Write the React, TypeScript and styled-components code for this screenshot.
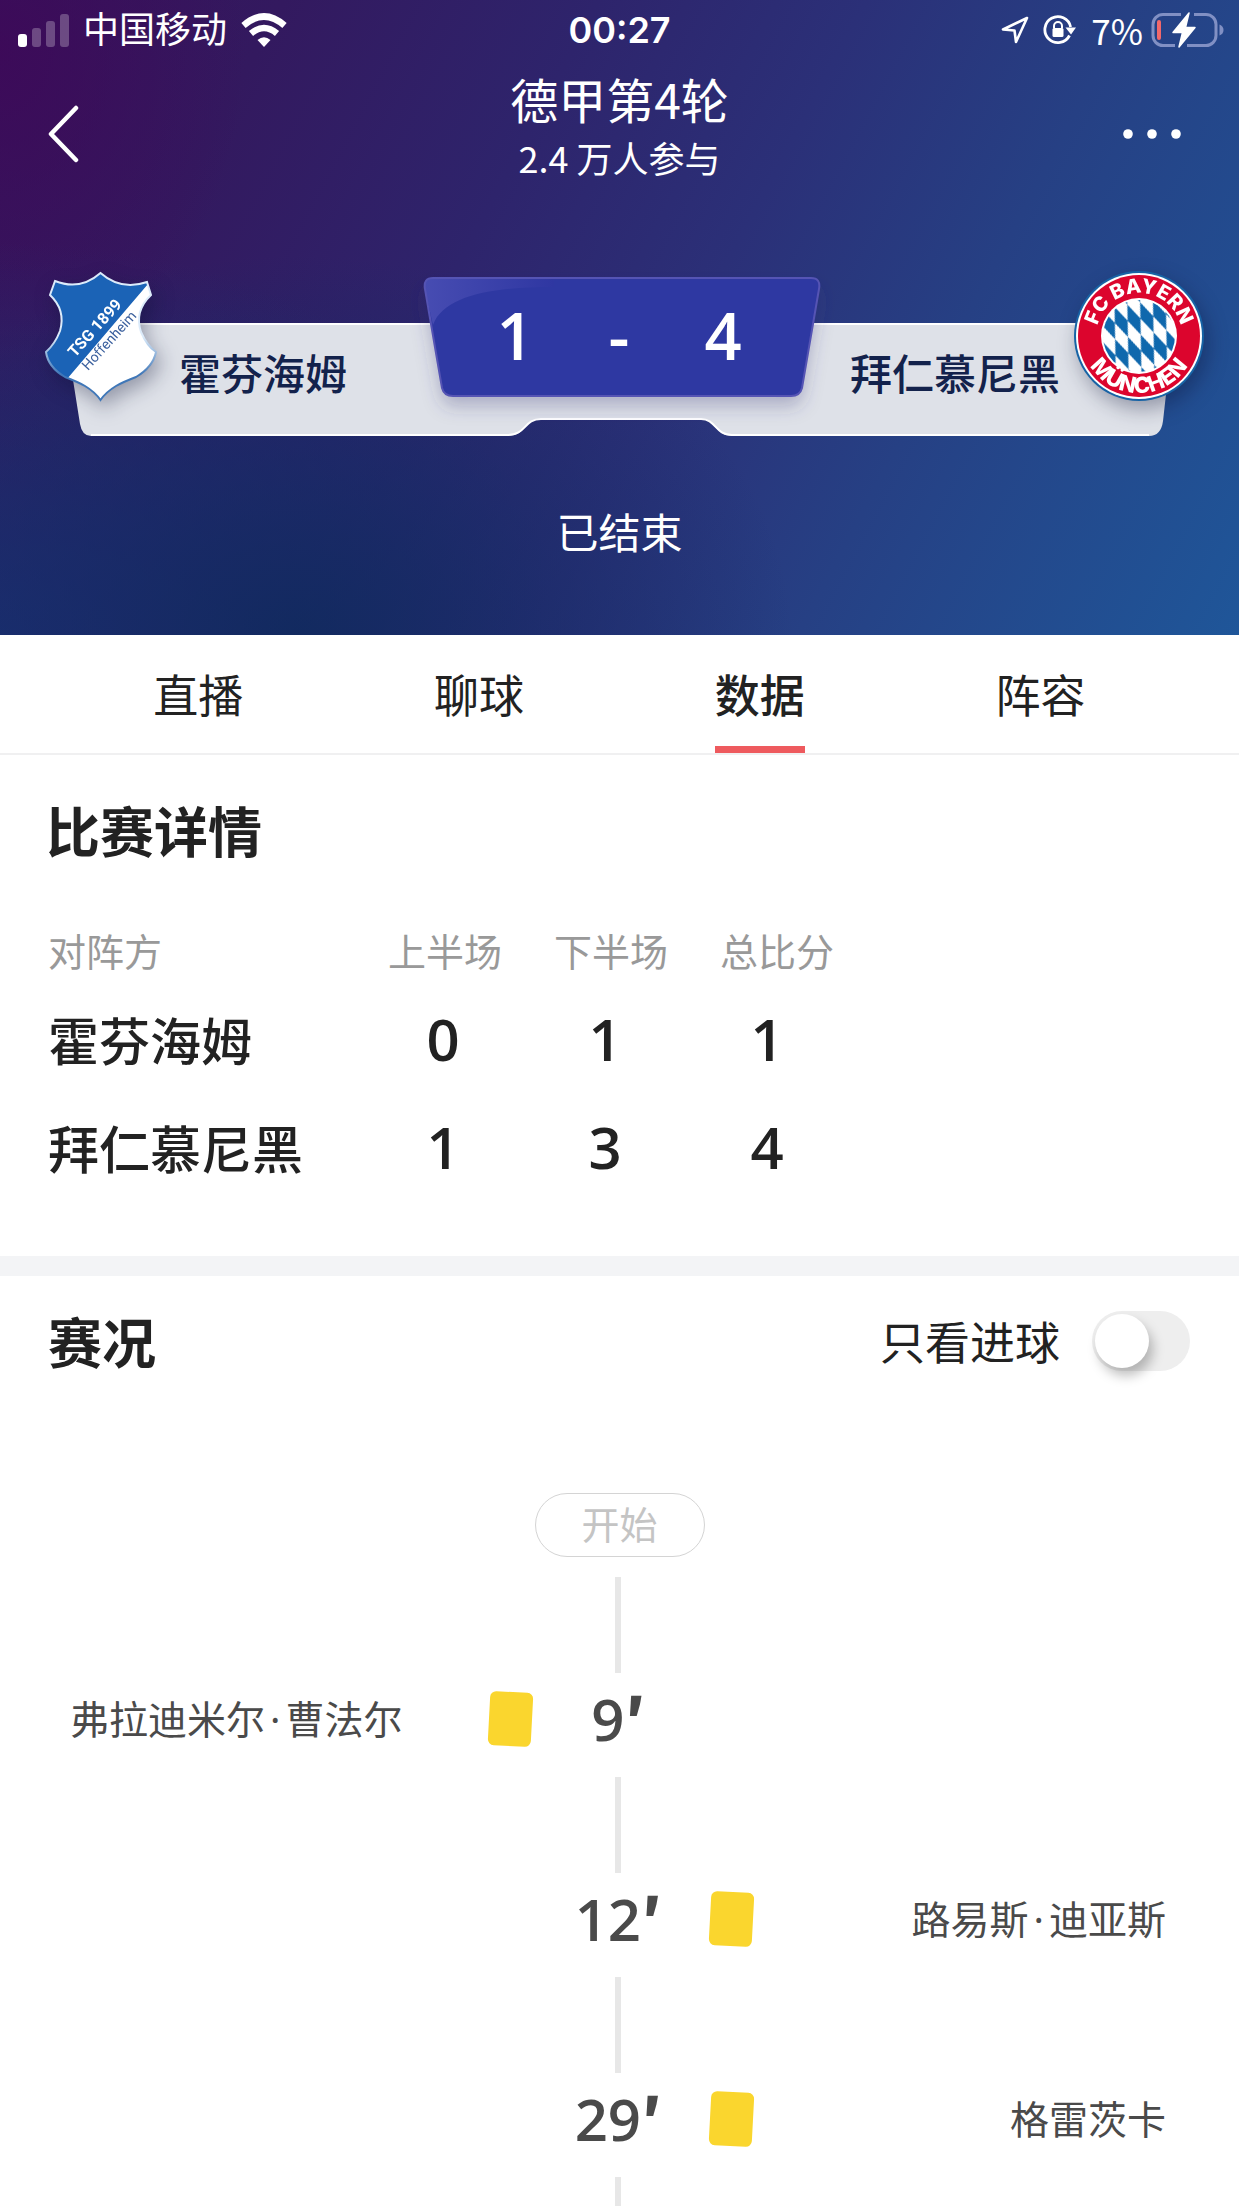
import React, { useState } from 'react';
import styled, { createGlobalStyle } from 'styled-components';

const cjk = '"Noto Sans CJK SC", "Noto Sans", sans-serif';
const latin = `Inter, ${cjk}`;
const digits = `"Open Sans", ${cjk}`;

const GlobalStyle = createGlobalStyle`
  * { box-sizing: border-box; }
  body { margin: 0; background: #fff; }
  button, input { font: inherit; color: inherit; }
`;

const Screen = styled.div`
  height: 100vh;
  overflow: hidden;
  display: flex;
  flex-direction: column;
  background: #fff;
  color: #222;
  font-family: ${cjk};
`;

const Hero = styled.header`
  flex: none;
  height: 635px;
  color: #fff;
  background:
    radial-gradient(ellipse 40% 60% at 24% 100%, rgba(16, 42, 94, 0.9), rgba(18, 42, 98, 0.55) 45%, rgba(20, 42, 100, 0) 100%),
    radial-gradient(ellipse 45% 62% at 0% 100%, rgba(28, 48, 116, 0.95), rgba(28, 48, 116, 0) 100%),
    radial-gradient(ellipse 20% 50% at 0% 8%, rgba(62, 8, 88, 0.8), rgba(56, 18, 92, 0) 100%),
    linear-gradient(118deg, #36145c 0%, #33195f 18%, #2e246c 38%, #2b3078 55%, #264084 72%, #1f5699 100%);
`;

const StatusBar = styled.div`
  display: flex;
  align-items: center;
  justify-content: space-between;
  height: 60px;
  padding: 0 15px;
`;

const StatusGroup = styled.div<{ $end?: boolean }>`
  flex: 1 1 0;
  display: flex;
  align-items: center;
  justify-content: ${p => (p.$end ? 'flex-end' : 'flex-start')};
  gap: 14px;
  font: 400 36px/60px ${latin};
  white-space: nowrap;
`;

const BatteryGroup = styled.div`
  display: flex;
  align-items: center;
  gap: 8px;
`;

const PowerText = styled.span`
  font: 400 35px/58px "Noto Sans CJK SC", sans-serif;
`;

const Clock = styled.time`
  font: 600 36px/60px ${latin};
`;

const NavBar = styled.nav`
  display: grid;
  grid-template-columns: 1fr auto 1fr;
  height: 130px;
  padding: 0 46px;
`;

const IconButton = styled.button<{ $end?: boolean }>`
  align-self: center;
  justify-self: ${p => (p.$end ? 'end' : 'start')};
  display: flex;
  padding: 18px 0 0;
  border: 0;
  background: none;
  cursor: pointer;
`;

const Heading = styled.div`
  text-align: center;
  padding-top: 6px;
`;

const Title = styled.h1`
  margin: 0;
  font-size: 48px;
  line-height: 64px;
  font-weight: 400;
`;

const Subtitle = styled.p`
  margin: 0;
  font-size: 36px;
  line-height: 54px;
`;

const Scoreboard = styled.section`
  position: relative;
  display: grid;
  grid-template-columns: 1fr 396px 1fr;
  height: 167px;
  margin: 80px 35px 0 40px;
`;

const Backdrop = styled.svg`
  position: absolute;
  inset: 0;
  width: 100%;
  height: 100%;
  overflow: visible;
`;

const Team = styled.div<{ $away?: boolean }>`
  position: relative;
  display: flex;
  flex-direction: ${p => (p.$away ? 'row-reverse' : 'row')};
  align-items: flex-start;
  gap: ${p => (p.$away ? 14 : 18)}px;
  color: #13224c;
`;

const TeamName = styled.span`
  margin-top: 72px;
  font-size: 42px;
  line-height: 60px;
  font-weight: 500;
  white-space: nowrap;
`;

const Badge = styled.svg`
  flex: none;
  display: block;
  overflow: visible;
  filter: drop-shadow(4px 8px 10px rgba(10, 15, 50, 0.35));
`;

const ScorePlate = styled.div`
  position: relative;
  height: 120px;
  margin-top: 7px;
`;

const Score = styled.div`
  position: relative;
  display: grid;
  grid-template-columns: repeat(3, 1fr);
  justify-items: center;
  padding: 0 45px 0 39px;
  font: 600 65px/116px ${digits};
`;

const MatchState = styled.p`
  margin: 64px 0 0;
  font-size: 42px;
  line-height: 60px;
  text-align: center;
`;

const Tabs = styled.nav`
  flex: none;
  display: grid;
  grid-template-columns: repeat(4, 1fr);
  justify-items: center;
  height: 120px;
  padding: 0 58px;
  border-bottom: 2px solid #f0f0f1;
`;

const Tab = styled.a<{ $active?: boolean }>`
  font-size: 45px;
  line-height: 118px;
  height: 118px;
  color: #222;
  text-decoration: none;
  font-weight: ${p => (p.$active ? 500 : 400)};
  box-shadow: ${p => (p.$active ? 'inset 0 -7px 0 #ee5a5e' : 'none')};
`;

const Details = styled.section`
  flex: none;
  padding: 35px 46px 53px;
  border-bottom: 20px solid #f3f4f6;
`;

const SectionTitle = styled.h2`
  margin: 0;
  font-size: 54px;
  line-height: 80px;
  font-weight: 600;
`;

const ResultTable = styled.table`
  display: block;
  margin-top: 49px;
`;

const HeadRow = styled.tr`
  display: grid;
  grid-template-columns: 314px repeat(3, 166px);
  height: 62px;
  font-size: 38px;
  line-height: 58px;
  color: #999;
`;

const HeadCell = styled.th<{ $name?: boolean }>`
  padding: 0;
  font-weight: 400;
  text-align: ${p => (p.$name ? 'left' : 'center')};
`;

const ResultRow = styled.tr`
  display: grid;
  grid-template-columns: 314px repeat(3, 162px);
  height: 108px;
  line-height: 108px;
`;

const NameCell = styled.th`
  padding: 0;
  font-size: 51px;
  font-weight: 500;
  text-align: left;
`;

const NumberCell = styled.td`
  padding: 0;
  font-family: ${digits};
  font-size: 58px;
  font-weight: 600;
  text-align: center;
`;

const Events = styled.section`
  flex: 1 1 auto;
  min-height: 0;
  overflow: hidden;
`;

const EventsHeader = styled.div`
  display: flex;
  align-items: center;
  justify-content: space-between;
  height: 130px;
  padding: 0 49px 0 48px;
`;

const FilterLabel = styled.label`
  display: flex;
  align-items: center;
  gap: 32px;
  font-size: 45px;
  line-height: 60px;
  cursor: pointer;
`;

const Toggle = styled.input`
  appearance: none;
  display: flex;
  align-items: center;
  width: 98px;
  height: 60px;
  margin: 0;
  padding: 0 3px;
  border-radius: 30px;
  background: #eeeeee;
  cursor: pointer;

  &::before {
    content: '';
    width: 54px;
    height: 54px;
    border-radius: 50%;
    background: #fff;
    box-shadow: 4px 8px 12px rgba(0, 0, 0, 0.25);
  }

  &:checked { justify-content: flex-end; background: #ee5a5e; }
`;

const StartPill = styled.div`
  width: 170px;
  height: 64px;
  margin: 87px auto 20px;
  border: 1px solid #d4d4d4;
  border-radius: 32px;
  font-size: 38px;
  line-height: 58px;
  text-align: center;
  color: #c4c4c4;
`;

const Timeline = styled.ol`
  list-style: none;
  margin: 0;
  padding: 0 73px 0 70px;
`;

const EventItem = styled.li`
  &::before {
    content: '';
    display: block;
    width: 6px;
    height: 96px;
    margin: 0 auto;
    background: #e7e7e7;
  }
`;

const EventRow = styled.div`
  display: grid;
  grid-template-columns: 1fr auto 1fr;
  align-items: center;
  height: 104px;
  padding-bottom: 13px;
`;

const Side = styled.div<{ $away?: boolean }>`
  display: flex;
  flex-direction: ${p => (p.$away ? 'row-reverse' : 'row')};
  align-items: center;
  justify-content: space-between;
`;

const Minute = styled.span`
  min-width: 74px;
  margin: 0 49px;
  font: 600 58px/88px ${digits};
  color: #4a4a4a;
  text-align: center;
  white-space: nowrap;
`;

const Prime = styled.span`
  font-family: ${cjk};
  font-weight: 800;
  line-height: 1;
`;

const Player = styled.span`
  font-family: "Noto Sans", ${cjk};
  font-size: 39px;
  line-height: 60px;
  color: #4a4a4a;
  white-space: nowrap;
`;

const NameDot = styled.span`
  padding: 0 5px;
`;

const YellowCard = styled.span`
  width: 43px;
  height: 54px;
  border-radius: 6px;
  background: #fad62e;
  transform: rotate(3deg);
`;

function SignalIcon() {
  return (
    <svg width="54" height="33" viewBox="-3 0 54 33" fill="#fff" aria-hidden="true">
      <rect x="0" y="20" width="9" height="13" rx="3" />
      <g opacity="0.25">
        <rect x="14" y="14" width="9" height="19" rx="3" />
        <rect x="28" y="7" width="9" height="26" rx="3" />
        <rect x="42" y="0" width="9" height="33" rx="3" />
      </g>
    </svg>
  );
}

function WifiIcon() {
  return (
    <svg width="46" height="34" viewBox="0 0 46 34" aria-hidden="true">
      <path d="M23 34 L16.5 27 Q23 21.500 29.500 27 Z" fill="#fff" />
      <g fill="none" stroke="#fff" strokeWidth="6.500">
        <path d="M10 20.500 Q23 9.500 36 20.500" />
        <path d="M2.500 12.500 Q23 -5.500 43.500 12.500" />
      </g>
    </svg>
  );
}

function LocationIcon() {
  return (
    <svg width="28" height="28" viewBox="0 0 28 28" fill="none" stroke="#fff" strokeWidth="2.600" strokeLinejoin="round" aria-hidden="true">
      <path d="M26 2 L2 13.500 L13.500 14.500 L15 26 Z" />
    </svg>
  );
}

function RotationLockIcon() {
  return (
    <svg width="34" height="30" viewBox="0 0 34 30" aria-hidden="true">
      <g fill="none" stroke="#fff" strokeWidth="2.800">
        <path d="M26.500 20.500 A13 13 0 1 1 27.600 12" />
        <path d="M11 13.500 V11 a4 4 0 0 1 8 0 V13.500" strokeWidth="2" />
      </g>
      <rect x="9.500" y="13" width="11" height="9" rx="1.500" fill="#fff" />
      <path d="M22.500 12.500 H33 L28 19.500 Z" fill="#fff" />
    </svg>
  );
}

function BatteryIcon() {
  return (
    <svg width="73" height="36" viewBox="0 0 73 36" aria-hidden="true">
      <g fill="none" stroke="#8190c4" strokeWidth="3">
        <path d="M30 2.500 H12 A10 10 0 0 0 2 12.500 V23.500 A10 10 0 0 0 12 33.500 H24" />
        <path d="M43 2.500 H55 A10 10 0 0 1 65 12.500 V23.500 A10 10 0 0 1 55 33.500 H36" />
      </g>
      <path d="M68.500 12.500 Q72.500 14 72.500 18 Q72.500 22 68.500 23.500 Z" fill="#8190c4" />
      <rect x="6" y="8" width="4" height="20" rx="2" fill="#f2686b" />
      <path d="M38 1 L22 20.500 H31.500 L28 35 L44 15.500 H34.500 Z" fill="#fff" stroke="#fff" strokeWidth="1.500" strokeLinejoin="round" />
    </svg>
  );
}

function BackIcon() {
  return (
    <svg width="34" height="58" viewBox="0 0 34 58" fill="none" aria-hidden="true">
      <path d="M30 3 L5 29 L30 55" stroke="#fff" strokeWidth="4.500" strokeLinecap="round" strokeLinejoin="round" />
    </svg>
  );
}

function MoreIcon() {
  return (
    <svg width="70" height="10" viewBox="0 0 70 10" fill="#fff" aria-hidden="true">
      <circle cx="5" cy="5" r="4.800" />
      <circle cx="29" cy="5" r="4.800" />
      <circle cx="53" cy="5" r="4.800" />
    </svg>
  );
}

function HoffenheimBadge() {
  const shield =
    'M60.500 3 Q81 21 107 12 L111 25 Q94 41 101 62 Q107 76 116 82 Q113 97 96 107 Q83 112 76 116 Q66 122 60.500 130 Q55 122 45 116 Q38 112 25 107 Q8 97 6 82 Q15 74 20 61 Q26 40 10 25 L15 11 Q40 21 60.500 3 Z';
  return (
    <Badge width="121" height="133" viewBox="0 0 121 133" role="img" aria-label="TSG 1899 Hoffenheim">
      <defs>
        <clipPath id="shield"><path d={shield} /></clipPath>
        <linearGradient id="shieldEdge" x1="0" y1="0" x2="0" y2="1">
          <stop offset="0.500" stopColor="#dcebfa" />
          <stop offset="0.800" stopColor="#3f77b8" />
        </linearGradient>
      </defs>
      <path d={shield} fill="#fff" />
      <path d="M0 0 H121 L108 14 L27 109 L0 133 Z" fill="#1b63b6" clipPath="url(#shield)" />
      <path d={shield} fill="none" stroke="url(#shieldEdge)" strokeWidth="2" />
      <text transform="translate(35 88) rotate(-48)" fill="#fff" fontFamily="Roboto, sans-serif" fontWeight="700" fontSize="16">TSG 1899</text>
      <text transform="translate(48 101) rotate(-48)" fill="#3a5f9d" fontFamily="Roboto, sans-serif" fontSize="14">Hoffenheim</text>
    </Badge>
  );
}

function BayernBadge() {
  return (
    <Badge width="130" height="133" viewBox="0 1 130 133" role="img" aria-label="FC Bayern München">
      <defs>
        <pattern id="lozenges" width="13" height="32" patternUnits="userSpaceOnUse" patternTransform="rotate(-10 65 67) skewX(14) translate(5 2)">
          <rect width="13" height="32" fill="#fff" />
          <path d="M6.500 0 L13 16 L6.500 32 L0 16 Z" fill="#0f68ad" />
        </pattern>
        <path id="arcTop" d="M22 67 A43 43 0 0 1 108 67" />
        <path id="arcBottom" d="M8 67 A57 57 0 0 0 122 67" />
      </defs>
      <circle cx="65" cy="67" r="65" fill="#1763a5" />
      <circle cx="65" cy="67" r="63" fill="#fff" />
      <circle cx="65" cy="67" r="61" fill="#dc052d" />
      <circle cx="65" cy="67" r="38" fill="#fff" />
      <circle cx="65" cy="67" r="36" fill="url(#lozenges)" />
      <g fill="#fff" fontFamily="Inter, sans-serif" fontWeight="800" textAnchor="middle">
        <text fontSize="20"><textPath href="#arcTop" startOffset="50%">FC BAYERN</textPath></text>
        <text fontSize="22"><textPath href="#arcBottom" startOffset="50%">MÜNCHEN</textPath></text>
      </g>
    </Badge>
  );
}

function BannerShape() {
  return (
    <Backdrop viewBox="0 0 1164 167" preserveAspectRatio="none" aria-hidden="true">
      <path
        d="M24 53 H1134 L1123 151 Q1121 166 1109 166 H692 C675 166 676 149 661 149 H501 C484 149 486 166 468 166 H51 Q42 166 40 154 Z"
        fill="#dee1e8"
      />
      <path d="M24 54 H1134" stroke="#fff" strokeWidth="2" />
      <path d="M1109 165 H692 C675 165 676 149 661 149 H501 C484 149 486 165 468 165 H51" fill="none" stroke="#fff" strokeWidth="2" />
    </Backdrop>
  );
}

function PlateShape() {
  const plate =
    'M9 1 H387 Q397 1 395 12 L378 111 Q376 119 367 119 H29 Q20 119 18 111 L1 12 Q-1 1 9 1 Z';
  return (
    <Backdrop viewBox="0 0 396 120" preserveAspectRatio="none" aria-hidden="true">
      <defs>
        <linearGradient id="gloss" x1="0" y1="0" x2="1" y2="0">
          <stop offset="0" stopColor="#474cb2" />
          <stop offset="1" stopColor="#2f37a2" />
        </linearGradient>
        <filter id="plateShadow" x="-20%" y="-20%" width="140%" height="160%">
          <feDropShadow dx="0" dy="10" stdDeviation="9" floodColor="#3a3674" floodOpacity="0.3" />
        </filter>
      </defs>
      <path d={plate} fill="#2f37a2" filter="url(#plateShadow)" />
      <path d="M9 1 H130 V10 C70 10 20 18 9 48 L1 12 Q-1 1 9 1 Z" fill="url(#gloss)" />
      <path d={plate} fill="none" stroke="#5554b4" strokeWidth="2" />
    </Backdrop>
  );
}

const tabs = ['直播', '聊球', '数据', '阵容'];

const results = [
  { team: '霍芬海姆', scores: [0, 1, 1] },
  { team: '拜仁慕尼黑', scores: [1, 3, 4] },
];

type MatchEvent = { minute?: number; player?: string[]; away?: boolean };

const events: MatchEvent[] = [
  { minute: 9, player: ['弗拉迪米尔', '曹法尔'] },
  { minute: 12, player: ['路易斯', '迪亚斯'], away: true },
  { minute: 29, player: ['格雷茨卡'], away: true },
  {},
];

function EventSide({ event, away }: { event: MatchEvent; away?: boolean }) {
  if (!event.player || !!event.away !== !!away) return <Side />;
  const [first, last] = event.player;
  return (
    <Side $away={away}>
      <Player>{first}{last && <><NameDot>·</NameDot>{last}</>}</Player>
      <YellowCard role="img" aria-label="黄牌" />
    </Side>
  );
}

export default function App() {
  const [goalsOnly, setGoalsOnly] = useState(false);

  return (
    <Screen>
      <GlobalStyle />
      <Hero>
        <StatusBar>
          <StatusGroup>
            <SignalIcon />
            <span>中国移动</span>
            <WifiIcon />
          </StatusGroup>
          <Clock>00:27</Clock>
          <StatusGroup $end>
            <LocationIcon />
            <RotationLockIcon />
            <BatteryGroup>
              <PowerText>7%</PowerText>
              <BatteryIcon />
            </BatteryGroup>
          </StatusGroup>
        </StatusBar>

        <NavBar>
          <IconButton aria-label="返回"><BackIcon /></IconButton>
          <Heading>
            <Title>德甲第4轮</Title>
            <Subtitle>2.4 万人参与</Subtitle>
          </Heading>
          <IconButton $end aria-label="更多"><MoreIcon /></IconButton>
        </NavBar>

        <Scoreboard>
          <BannerShape />
          <Team>
            <HoffenheimBadge />
            <TeamName>霍芬海姆</TeamName>
          </Team>
          <ScorePlate>
            <PlateShape />
            <Score>
              <span>1</span>
              <span>-</span>
              <span>4</span>
            </Score>
          </ScorePlate>
          <Team $away>
            <BayernBadge />
            <TeamName>拜仁慕尼黑</TeamName>
          </Team>
        </Scoreboard>

        <MatchState>已结束</MatchState>
      </Hero>

      <Tabs>
        {tabs.map(tab => (
          <Tab key={tab} href="#" $active={tab === '数据'}>{tab}</Tab>
        ))}
      </Tabs>

      <Details>
        <SectionTitle>比赛详情</SectionTitle>
        <ResultTable>
          <thead>
            <HeadRow>
              <HeadCell $name>对阵方</HeadCell>
              <HeadCell>上半场</HeadCell>
              <HeadCell>下半场</HeadCell>
              <HeadCell>总比分</HeadCell>
            </HeadRow>
          </thead>
          <tbody>
            {results.map(row => (
              <ResultRow key={row.team}>
                <NameCell scope="row">{row.team}</NameCell>
                {row.scores.map((score, i) => (
                  <NumberCell key={i}>{score}</NumberCell>
                ))}
              </ResultRow>
            ))}
          </tbody>
        </ResultTable>
      </Details>

      <Events>
        <EventsHeader>
          <SectionTitle>赛况</SectionTitle>
          <FilterLabel>
            只看进球
            <Toggle type="checkbox" checked={goalsOnly} onChange={e => setGoalsOnly(e.target.checked)} />
          </FilterLabel>
        </EventsHeader>
        <StartPill>开始</StartPill>
        <Timeline>
          {events.map((event, i) => (
            <EventItem key={i}>
              {event.minute && (
                <EventRow>
                  <EventSide event={event} />
                  <Minute>{event.minute}<Prime>′</Prime></Minute>
                  <EventSide event={event} away />
                </EventRow>
              )}
            </EventItem>
          ))}
        </Timeline>
      </Events>
    </Screen>
  );
}
